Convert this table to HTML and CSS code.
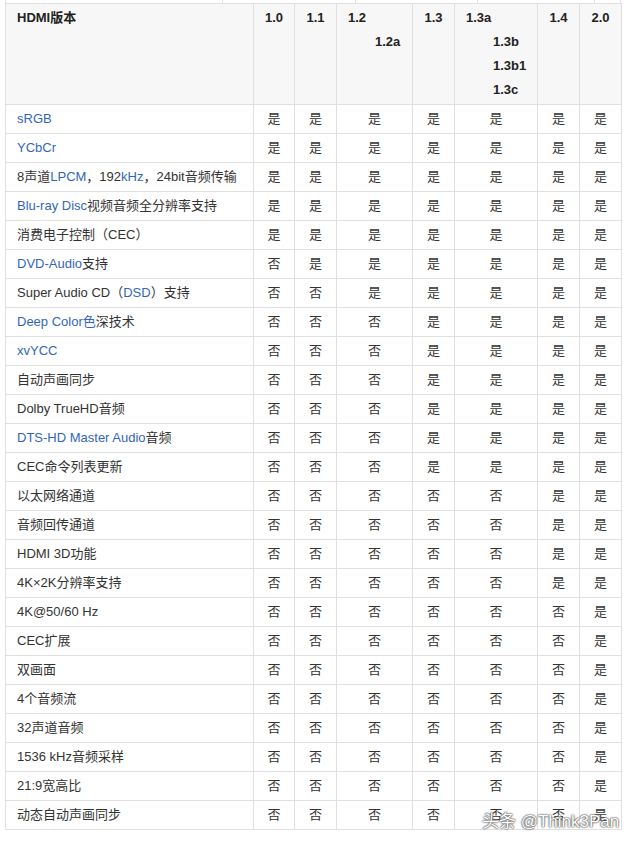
FILE: index.html
```html
<!DOCTYPE html>
<html lang="zh">
<head>
<meta charset="utf-8">
<link rel="stylesheet" href="styles.css">
</head>
<body>
<div class="page">
  <div class="strip">
    <span class="s1"></span><span class="s2"></span><span class="s3"></span><span class="s4"></span><span class="s5"></span>
  </div>
  <table class="tbl">
    <colgroup>
      <col class="c-name"><col class="c-n1"><col class="c-n"><col class="c-w"><col class="c-n"><col class="c-ww"><col class="c-n"><col class="c-n">
    </colgroup>
    <thead>
      <tr>
        <th class="h-name">HDMI版本</th>
        <th>1.0</th>
        <th>1.1</th>
        <th class="h-left"><div>1.2</div><div class="sub">1.2a</div></th>
        <th>1.3</th>
        <th class="h-left"><div>1.3a</div><div class="sub">1.3b</div><div class="sub">1.3b1</div><div class="sub">1.3c</div></th>
        <th>1.4</th>
        <th>2.0</th>
      </tr>
    </thead>
    <tbody>
      <tr><td class="name"><a>sRGB</a></td><td>是</td><td>是</td><td>是</td><td>是</td><td>是</td><td>是</td><td>是</td></tr>
      <tr><td class="name"><a>YCbCr</a></td><td>是</td><td>是</td><td>是</td><td>是</td><td>是</td><td>是</td><td>是</td></tr>
      <tr><td class="name">8声道<a>LPCM</a>，192<a>kHz</a>，24bit音频传输</td><td>是</td><td>是</td><td>是</td><td>是</td><td>是</td><td>是</td><td>是</td></tr>
      <tr><td class="name"><a>Blu-ray Disc</a>视频音频全分辨率支持</td><td>是</td><td>是</td><td>是</td><td>是</td><td>是</td><td>是</td><td>是</td></tr>
      <tr><td class="name">消费电子控制（CEC）</td><td>是</td><td>是</td><td>是</td><td>是</td><td>是</td><td>是</td><td>是</td></tr>
      <tr><td class="name"><a>DVD-Audio</a>支持</td><td>否</td><td>是</td><td>是</td><td>是</td><td>是</td><td>是</td><td>是</td></tr>
      <tr><td class="name">Super Audio CD（<a>DSD</a>）支持</td><td>否</td><td>否</td><td>是</td><td>是</td><td>是</td><td>是</td><td>是</td></tr>
      <tr><td class="name"><a>Deep Color色</a>深技术</td><td>否</td><td>否</td><td>否</td><td>是</td><td>是</td><td>是</td><td>是</td></tr>
      <tr><td class="name"><a>xvYCC</a></td><td>否</td><td>否</td><td>否</td><td>是</td><td>是</td><td>是</td><td>是</td></tr>
      <tr><td class="name">自动声画同步</td><td>否</td><td>否</td><td>否</td><td>是</td><td>是</td><td>是</td><td>是</td></tr>
      <tr><td class="name">Dolby TrueHD音频</td><td>否</td><td>否</td><td>否</td><td>是</td><td>是</td><td>是</td><td>是</td></tr>
      <tr><td class="name"><a>DTS-HD Master Audio</a>音频</td><td>否</td><td>否</td><td>否</td><td>是</td><td>是</td><td>是</td><td>是</td></tr>
      <tr><td class="name">CEC命令列表更新</td><td>否</td><td>否</td><td>否</td><td>是</td><td>是</td><td>是</td><td>是</td></tr>
      <tr><td class="name">以太网络通道</td><td>否</td><td>否</td><td>否</td><td>否</td><td>否</td><td>是</td><td>是</td></tr>
      <tr><td class="name">音频回传通道</td><td>否</td><td>否</td><td>否</td><td>否</td><td>否</td><td>是</td><td>是</td></tr>
      <tr><td class="name">HDMI 3D功能</td><td>否</td><td>否</td><td>否</td><td>否</td><td>否</td><td>是</td><td>是</td></tr>
      <tr><td class="name">4K×2K分辨率支持</td><td>否</td><td>否</td><td>否</td><td>否</td><td>否</td><td>是</td><td>是</td></tr>
      <tr><td class="name">4K@50/60 Hz</td><td>否</td><td>否</td><td>否</td><td>否</td><td>否</td><td>否</td><td>是</td></tr>
      <tr><td class="name">CEC扩展</td><td>否</td><td>否</td><td>否</td><td>否</td><td>否</td><td>否</td><td>是</td></tr>
      <tr><td class="name">双画面</td><td>否</td><td>否</td><td>否</td><td>否</td><td>否</td><td>否</td><td>是</td></tr>
      <tr><td class="name">4个音频流</td><td>否</td><td>否</td><td>否</td><td>否</td><td>否</td><td>否</td><td>是</td></tr>
      <tr><td class="name">32声道音频</td><td>否</td><td>否</td><td>否</td><td>否</td><td>否</td><td>否</td><td>是</td></tr>
      <tr><td class="name">1536 kHz音频采样</td><td>否</td><td>否</td><td>否</td><td>否</td><td>否</td><td>否</td><td>是</td></tr>
      <tr><td class="name">21:9宽高比</td><td>否</td><td>否</td><td>否</td><td>否</td><td>否</td><td>否</td><td>是</td></tr>
      <tr><td class="name">动态自动声画同步</td><td>否</td><td>否</td><td>否</td><td>否</td><td>否</td><td>否</td><td>是</td></tr>
    </tbody>
  </table>
  <div class="watermark">头条 @Think3Pan</div>
</div>
</body>
</html>
```

FILE: styles.css
```css
html, body {
  margin: 0;
  padding: 0;
  background: #fff;
}
body {
  font-family: "Liberation Sans", Arial, "Noto Sans CJK SC", sans-serif;
  font-size: 13px;
  color: #333;
}
.page {
  position: relative;
  width: 638px;
  height: 845px;
  padding-left: 5px;
  box-sizing: border-box;
}
.strip {
  display: flex;
  height: 3px;
  width: 616px;
}
.strip span {
  display: block;
  height: 3px;
  border-left: 1px solid #e2e2e2;
  box-sizing: border-box;
}
.strip .s1 { width: 217px; }
.strip .s2 { width: 133px; }
.strip .s3 { width: 122px; }
.strip .s4 { width: 117px; }
.strip .s5 { width: 27px; border-right: 1px solid #e2e2e2; }
.tbl {
  border-collapse: collapse;
  table-layout: fixed;
  width: 616px;
}
.c-name { width: 248px; }
.c-n1 { width: 41px; }
.c-n { width: 42px; }
.c-w { width: 76px; }
.c-ww { width: 83px; }
.tbl th, .tbl td {
  border: 1px solid #e0e0e0;
  padding: 2px 11px;
  line-height: 24px;
  white-space: nowrap;
}
.tbl th {
  background: #f7f7f7;
  font-weight: bold;
  color: #222;
  vertical-align: top;
  text-align: center;
}
.tbl th.h-name, .tbl th.h-left {
  text-align: left;
}
.tbl th .sub {
  padding-left: 27px;
}
.tbl td {
  text-align: center;
  vertical-align: middle;
}
.tbl td.name {
  text-align: left;
  color: #333;
}
.tbl a {
  color: #3366bb;
  text-decoration: none;
}
.watermark {
  position: absolute;
  left: 482px;
  top: 811px;
  font-size: 17px;
  line-height: 22px;
  color: #fff;
  text-shadow: 0 0 1px #555, 0 0 2px #555, 0 0 2px #777;
  white-space: nowrap;
}
```
